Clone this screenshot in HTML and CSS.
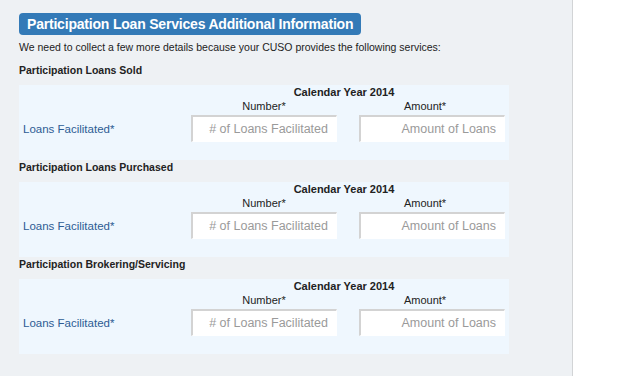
FILE: index.html
```html
<!DOCTYPE html>
<html lang="en">
<head>
  <meta charset="UTF-8" />
  <meta name="viewport" content="width=device-width, initial-scale=1.0"/>
  <title>Participation Loan Services</title>
  <link rel="stylesheet" href="styles.css">
</head>
<body>

  <div class="page">
    <div class="main">
      <h1 class="title">Participation Loan Services Additional Information</h1>
      <p class="intro">We need to collect a few more details because your CUSO provides the following services:</p>

      <h2 class="section">Participation Loans Sold</h2>
      <div class="box">
        <div class="year">Calendar Year 2014</div>
        <div class="col-head first">Number*</div>
        <div class="col-head">Amount*</div>
        <label class="label">Loans Facilitated*</label>
        <input class="num" type="text" placeholder="# of Loans Facilitated" />
        <input class="amt" type="text" placeholder="Amount of Loans" />
      </div>

      <h2 class="section">Participation Loans Purchased</h2>
      <div class="box">
        <div class="year">Calendar Year 2014</div>
        <div class="col-head first">Number*</div>
        <div class="col-head">Amount*</div>
        <label class="label">Loans Facilitated*</label>
        <input class="num" type="text" placeholder="# of Loans Facilitated" />
        <input class="amt" type="text" placeholder="Amount of Loans" />
      </div>

      <h2 class="section">Participation Brokering/Servicing</h2>
      <div class="box">
        <div class="year">Calendar Year 2014</div>
        <div class="col-head first">Number*</div>
        <div class="col-head">Amount*</div>
        <label class="label">Loans Facilitated*</label>
        <input class="num" type="text" placeholder="# of Loans Facilitated" />
        <input class="amt" type="text" placeholder="Amount of Loans" />
      </div>
    </div>
  </div>

</body>
</html>
```

FILE: styles.css
```css
* { box-sizing: border-box; margin: 0; padding: 0; }
body {
  font-family: 'Liberation Sans', Arial, sans-serif;
  background: #fff;
  color: #222;
  font-size: 11px;
}

.page {
  display: flex;
  min-height: 100vh;
}

.main {
  width: 573px;
  min-height: 100vh;
  background: #eef1f4;
  border-right: 1px solid #d2d4d6;
  padding: 13px 0 0 19px;
}

.title {
  display: inline-block;
  height: 22px;
  line-height: 22px;
  padding: 0 8px;
  background: #337ab7;
  color: #fff;
  font-size: 14px;
  letter-spacing: -0.2px;
  font-weight: bold;
  border-radius: 4px;
}

.intro {
  margin-top: 5px;
  line-height: 14px;
  font-size: 10.5px;
}

.section {
  font-size: 10.5px;
  font-weight: bold;
  line-height: 14px;
  margin-bottom: 8px;
}
.intro + .section { margin-top: 9px; }

.box {
  width: 490px;
  background: #eff7fe;
  padding-bottom: 18px;
  display: grid;
  grid-template-columns: 164px 162px 160px;
  grid-template-rows: 14px 14px 29px;
}

.year {
  grid-column: 2 / 4;
  text-align: center;
  font-weight: bold;
  line-height: 14px;
}

.col-head {
  text-align: center;
  line-height: 14px;
}
.col-head.first { grid-column: 2; }

.label {
  align-self: center;
  padding-left: 4px;
  margin-top: 2px;
  font-size: 11.5px;
  color: #2d5c94;
}

input {
  margin-top: 2px;
  height: 27px;
  width: 146px;
  border: 1px solid #fff;
  border-top: 2px solid #d3d3d3;
  border-left: 2px solid #d3d3d3;
  background: #fff;
  font-family: 'Liberation Sans', Arial, sans-serif;
  font-size: 12.5px;
  text-align: right;
  padding-right: 8px;
  color: #333;
  outline: none;
}
input::placeholder { color: #9a9a9a; }

.num { margin-left: 8px; }
.amt { margin-left: 14px; }
```
